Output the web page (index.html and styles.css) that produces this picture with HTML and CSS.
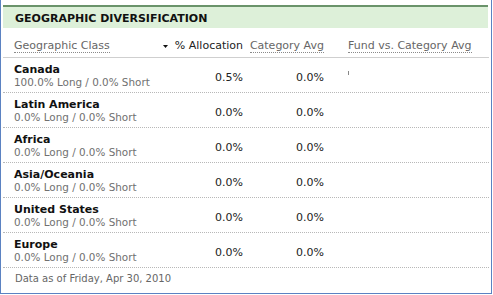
FILE: index.html
```html
<!DOCTYPE html>
<html>
<head>
<meta charset="utf-8">
<link rel="stylesheet" href="styles.css">
</head>
<body>
<div class="frame">
  <div class="bar">GEOGRAPHIC DIVERSIFICATION</div>
  <div class="table">
    <div class="row head">
      <div class="c1"><span class="ul">Geographic Class</span></div>
      <div class="c2"><svg class="arrow" width="5" height="3" viewBox="0 0 5 3"><path d="M0 0H5L2.5 3Z" fill="#111"/></svg><span class="sorted">% Allocation</span></div>
      <div class="c3"><span class="ul">Category Avg</span></div>
      <div class="c4"><span class="ul">Fund vs. Category Avg</span></div>
    </div>
    <div class="row">
      <div class="c1"><div class="name">Canada</div><div class="sub">100.0% Long / 0.0% Short</div></div>
      <div class="c2 val">0.5%</div>
      <div class="c3 val">0.0%</div>
      <div class="c4"><span class="tick"></span></div>
    </div>
    <div class="row">
      <div class="c1"><div class="name">Latin America</div><div class="sub">0.0% Long / 0.0% Short</div></div>
      <div class="c2 val">0.0%</div>
      <div class="c3 val">0.0%</div>
      <div class="c4"></div>
    </div>
    <div class="row">
      <div class="c1"><div class="name">Africa</div><div class="sub">0.0% Long / 0.0% Short</div></div>
      <div class="c2 val">0.0%</div>
      <div class="c3 val">0.0%</div>
      <div class="c4"></div>
    </div>
    <div class="row">
      <div class="c1"><div class="name">Asia/Oceania</div><div class="sub">0.0% Long / 0.0% Short</div></div>
      <div class="c2 val">0.0%</div>
      <div class="c3 val">0.0%</div>
      <div class="c4"></div>
    </div>
    <div class="row">
      <div class="c1"><div class="name">United States</div><div class="sub">0.0% Long / 0.0% Short</div></div>
      <div class="c2 val">0.0%</div>
      <div class="c3 val">0.0%</div>
      <div class="c4"></div>
    </div>
    <div class="row">
      <div class="c1"><div class="name">Europe</div><div class="sub">0.0% Long / 0.0% Short</div></div>
      <div class="c2 val">0.0%</div>
      <div class="c3 val">0.0%</div>
      <div class="c4"></div>
    </div>
    <div class="foot">Data as of Friday, Apr 30, 2010</div>
  </div>
</div>
</body>
</html>
```
FILE: styles.css
```css
html, body {
  margin: 0;
  padding: 0;
  background: #ffffff;
}
body {
  font-family: Verdana, "DejaVu Sans", sans-serif;
  color: #111;
}
.frame {
  box-sizing: border-box;
  width: 492px;
  height: 294px;
  border: 1px solid #5b82c2;
  border-top: none;
  padding-top: 5px;
}
.bar {
  margin: 0 3px 0 2px;
  border-top: 2px solid #6a936a;
  background: #ddf0d9;
  padding: 5px 11px 3px 12px;
  font-size: 11px;
  line-height: 13px;
  font-weight: bold;
  color: #111;
}
.table {
  margin: 0 2px 0 2px;
}
.row {
  display: grid;
  grid-template-columns: 150px 90px 81px 1fr;
  border-bottom: 1px dotted #b8b8b8;
  padding: 5px 0 3px 0;
  height: 26px;
}
.row.head {
  height: auto;
  padding: 12px 0 4px 0;
  border-bottom: 1px solid #cfcfcf;
}
.head > div {
  display: flex;
  align-items: flex-end;
}
.c1 {
  padding-left: 11px;
}
.head .c2, .head .c3 {
  justify-content: flex-end;
}
.c4 {
  padding-left: 24px;
}
.ul {
  display: inline-block;
  font-size: 11px;
  line-height: 12px;
  color: #666;
  border-bottom: 1px dotted #8a8a8a;
  white-space: nowrap;
}
.sorted {
  display: inline-block;
  font-size: 11px;
  line-height: 12px;
  color: #222;
  padding-bottom: 1px;
  white-space: nowrap;
}
.arrow {
  display: block;
  flex: none;
  margin: 0 7px 5px 0;
}
.name {
  font-size: 11px;
  line-height: 13px;
  font-weight: bold;
  color: #111;
  white-space: nowrap;
}
.sub {
  font-size: 10.4px;
  line-height: 13px;
  color: #707070;
  white-space: nowrap;
}
.val {
  text-align: right;
  font-size: 11px;
  line-height: 13px;
  padding-top: 8px;
  color: #222;
}
.tick {
  display: block;
  width: 1px;
  height: 4px;
  margin-top: 8px;
  background: #888;
}
.foot {
  padding: 4px 0 0 12px;
  font-size: 10px;
  line-height: 13px;
  color: #666;
}
```
